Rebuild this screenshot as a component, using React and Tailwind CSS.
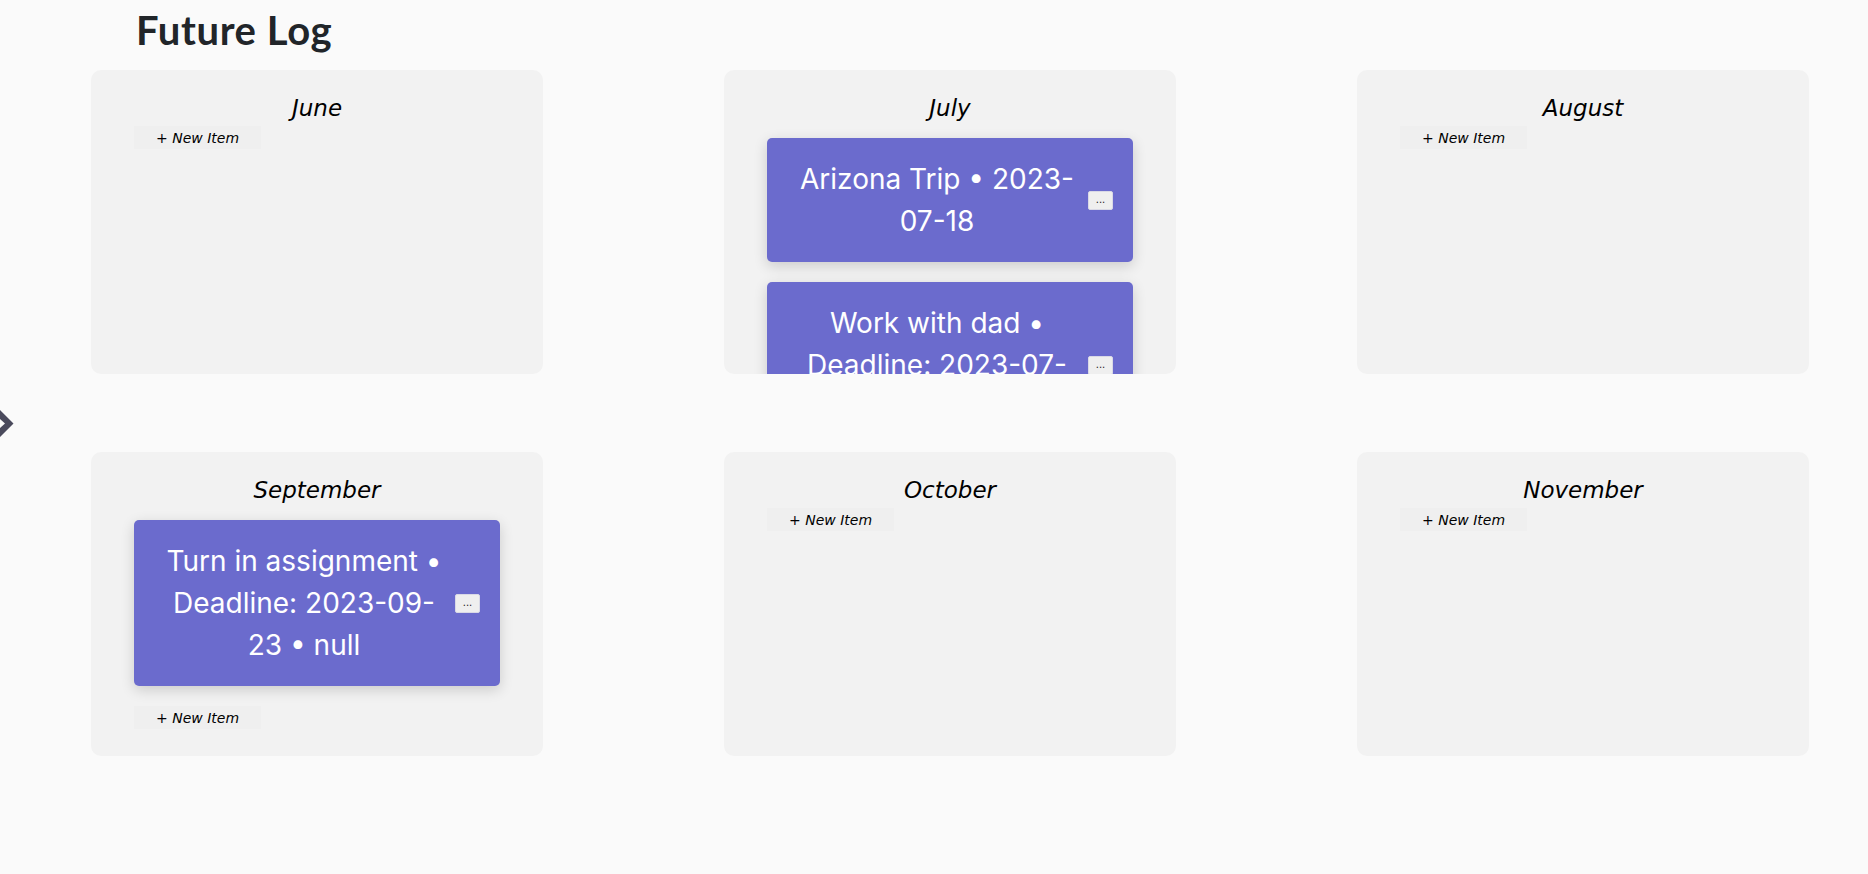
const MONTHS = [
    { name: "June", items: [] },
    { name: "July", items: ["Arizona Trip • 2023-07-18", "Work with dad • Deadline: 2023-07-28 • null"] },
    { name: "August", items: [] },
    { name: "September", items: ["Turn in assignment • Deadline: 2023-09-23 • null"] },
    { name: "October", items: [] },
    { name: "November", items: [] },
];

function LogItem({ text }) {
    return (
        <div className="flex items-center gap-[7px] pl-[26px] pr-5 py-5 rounded-[5px] bg-[#6b6bcd] shadow-[0_4px_14px_rgba(0,0,0,0.16)]">
            <p className="flex-1 text-center text-white text-[28px] leading-[42px] font-['Inter',sans-serif]">
                {text}
            </p>
            <button className="w-[25px] h-[19px] shrink-0 flex items-center justify-center rounded-[2px] bg-[#efefef] border border-[#d9d9e6] text-[10px] leading-none text-[#222] font-['DejaVu_Sans',sans-serif]">
                ...
            </button>
        </div>
    );
}

function MonthCard({ name, items }) {
    return (
        <div className="h-[304px] overflow-hidden rounded-[10px] bg-[#f2f2f2] px-[43px] pt-5">

            {/* LABEL */}

            <h2 className="text-center italic text-[23px] leading-[36px] text-black font-['DejaVu_Sans',sans-serif]">
                {name}
            </h2>

            {/* ITEMS */}

            {items.length > 0 && (
                <div className="flex flex-col gap-5 pt-3 pb-5">
                    {items.map((t) => (
                        <LogItem key={t} text={t} />
                    ))}
                </div>
            )}

            <button className="w-[127px] h-[23px] flex items-center pl-[22px] bg-[#efefef] italic text-[14px] leading-none text-black font-['DejaVu_Sans',sans-serif]">
                + New Item
            </button>

        </div>
    );
}

export default function App() {
    return (
        <div className="relative min-h-screen overflow-hidden bg-[#fafafa]">

            {/* SIDEBAR TOGGLE */}

            <svg className="absolute left-0 top-[409px]" width="14" height="30" viewBox="0 0 14 30">
                <polygon points="0,1 13.5,14.5 0,28 0,19 5,14.5 0,10" fill="#4a4a5c" />
            </svg>

            {/* HEADER */}

            <h1 className="pl-[136px] pt-[6px] text-[40px] leading-[48px] font-bold tracking-[0.6px] text-[#212529] font-['Lato',sans-serif]">
                Future Log
            </h1>

            {/* GRID */}

            <div className="mt-4 grid grid-cols-[repeat(3,452px)] gap-x-[181px] gap-y-[78px] pl-[91px]">
                {MONTHS.map((m) => (
                    <MonthCard key={m.name} name={m.name} items={m.items} />
                ))}
            </div>

        </div>
    );
}
